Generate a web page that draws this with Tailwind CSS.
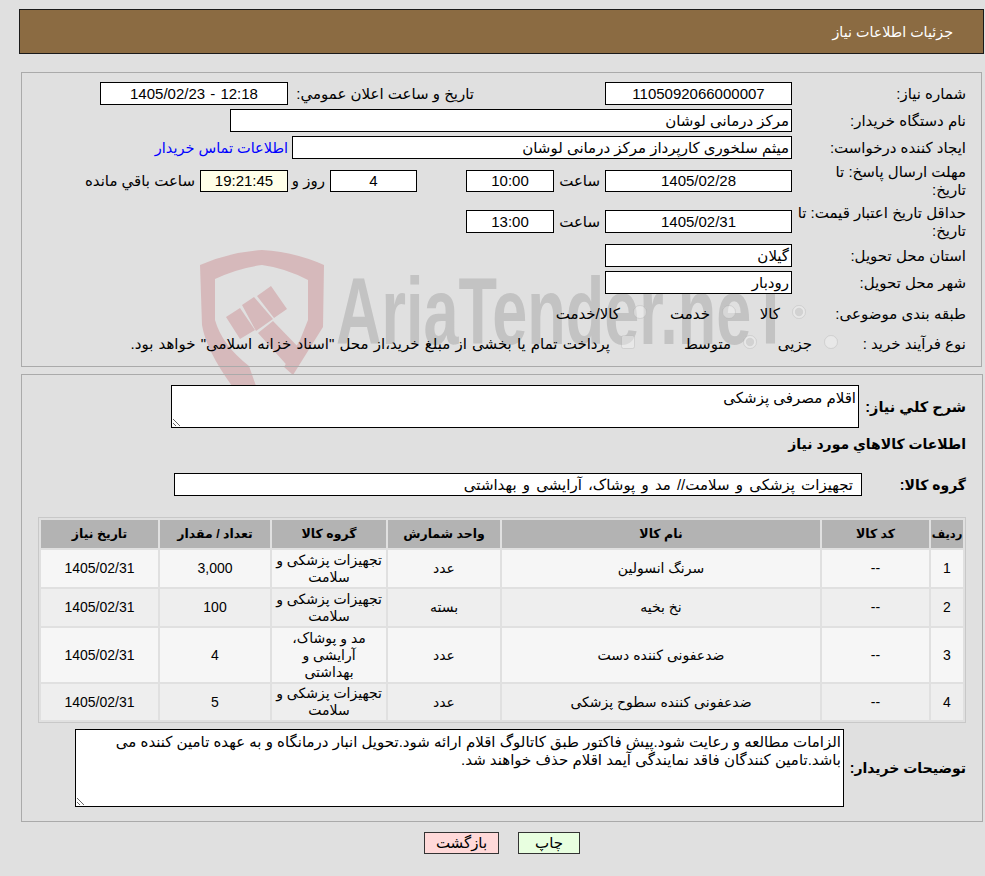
<!DOCTYPE html>
<html lang="fa" dir="rtl">
<head>
    <meta charset="UTF-8">
    <title>جزئیات اطلاعات نیاز</title>
    <script src="https://cdn.jsdelivr.net/npm/@tailwindcss/browser@4"></script>
</head>
<body class="relative bg-[#e0e0e0] w-[985px] h-[876px] overflow-hidden text-[15px] leading-[18px] text-black font-['Liberation_Sans','DejaVu_Sans',sans-serif]">
    <!-- watermark, sits under both panels -->
    <svg class="absolute left-[190px] top-[240px]" width="150" height="146" viewBox="190 240 150 146">
        <path fill="#d6b9bb" fill-rule="evenodd" d="M200 265 Q230 252 262 250 Q295 252 324 265 L323 327 L293 375 L284 367 L300 340 L308 320 L308 280 Q285 268 262 265 Q238 268 215 279 L215 320 Q222 345 249 366 L256 386 L232 386 Q206 350 202 325 Z"/>
        <path fill="#d6b9bb" d="M226 317 L240 308 L255 330 L240 339 Z M242 305 L254 297 L273 319 L256 331 Z M257 296 L271 286 L287 309 L274 318 Z M258 333 L273 321 L303 352 L293 372 Z"/>
    </svg>
    <div dir="ltr" class="absolute left-[336px] top-[262px] text-[94px] leading-[100px] font-bold text-[#c3c3c3] scale-x-[0.67] origin-left whitespace-nowrap">AriaTender.neT</div>

    <!-- header bar -->
    <div class="relative mr-px w-[965px] mt-[9px] h-[45px] bg-[#8b6b42] border border-[#1a1a1a] flex items-center pr-[30px] text-white text-[14.3px]">
        جزئیات اطلاعات نیاز
    </div>

    <!-- need details -->
    <div class="relative mr-[3px] w-[961px] mt-[18px] h-[295px] border border-[#aaa] pt-[9px] pr-[15px]">
        <div class="flex items-center h-[23px]">
            <div class="w-[174px] shrink-0">شماره نیاز:</div>
            <div class="w-[187px] h-[23px] bg-white border border-black text-center leading-[21px]">1105092066000007</div>
            <div class="mr-[131px] w-[181px] whitespace-nowrap">تاریخ و ساعت اعلان عمومي:</div>
            <div class="mr-[5px] w-[188px] h-[23px] bg-white border border-black text-center leading-[21px] [word-spacing:1px]" dir="ltr">1405/02/23 - 12:18</div>
        </div>
        <div class="flex items-center h-[23px] mt-[4px]">
            <div class="w-[174px] shrink-0">نام دستگاه خریدار:</div>
            <div class="w-[562px] h-[23px] bg-white border border-black pr-[2px] leading-[21px]">مرکز درمانی لوشان</div>
        </div>
        <div class="flex items-center h-[23px] mt-[4px]">
            <div class="w-[174px] shrink-0">ایجاد کننده درخواست:</div>
            <div class="w-[500px] h-[23px] bg-white border border-black pr-[2px] leading-[21px]">میثم سلخوری کارپرداز مرکز درمانی لوشان</div>
            <a href="#" class="mr-[4px] text-[#0000ff] whitespace-nowrap text-[14.5px]">اطلاعات تماس خریدار</a>
        </div>
        <div class="flex items-center h-[36px] mt-[4px]">
            <div class="w-[174px] shrink-0">مهلت ارسال پاسخ: تا<br>تاریخ:</div>
            <div class="w-[187px] h-[22px] bg-white border border-black text-center leading-[20px]">1405/02/28</div>
            <div class="mr-[5px] w-[42px] whitespace-nowrap">ساعت</div>
            <div class="mr-[4px] w-[88px] h-[22px] bg-white border border-black text-center leading-[20px]">10:00</div>
            <div class="mr-[49px] w-[87px] h-[22px] bg-white border border-black text-center leading-[20px]">4</div>
            <div class="mr-[5px] w-[28px] whitespace-nowrap">روز و</div>
            <div class="mr-[9px] w-[88px] h-[22px] bg-[#ffffe8] border border-black text-center leading-[20px]">19:21:45</div>
            <div class="mr-[5px] whitespace-nowrap">ساعت باقي مانده</div>
        </div>
        <div class="flex items-center h-[37px] mt-[4px]">
            <div class="w-[174px] shrink-0">حداقل تاریخ اعتبار قیمت: تا<br>تاریخ:</div>
            <div class="w-[187px] h-[23px] bg-white border border-black text-center leading-[21px]">1405/02/31</div>
            <div class="mr-[5px] w-[42px] whitespace-nowrap">ساعت</div>
            <div class="mr-[4px] w-[88px] h-[23px] bg-white border border-black text-center leading-[21px]">13:00</div>
        </div>
        <div class="flex items-center h-[23px] mt-[4px]">
            <div class="w-[174px] shrink-0">استان محل تحویل:</div>
            <div class="w-[187px] h-[23px] bg-white border border-black pr-[2px] leading-[21px]">گیلان</div>
        </div>
        <div class="flex items-center h-[23px] mt-[4px]">
            <div class="w-[174px] shrink-0">شهر محل تحویل:</div>
            <div class="w-[187px] h-[23px] border border-black bg-white pr-[2px] leading-[21px]">رودبار</div>
        </div>
        <div class="flex items-center h-[23px] mt-[8px]">
            <div class="w-[160px] shrink-0">طبقه بندی موضوعی:</div>
            <label class="w-[70px] shrink-0 flex items-center gap-[12px]"><input type="radio" name="kind" disabled checked class="w-[14px] h-[14px] m-0 mb-[3px] opacity-60"><span>کالا</span></label>
            <label class="w-[89px] shrink-0 flex items-center gap-[12px]"><input type="radio" name="kind" disabled class="w-[14px] h-[14px] m-0 mb-[3px] opacity-60"><span>خدمت</span></label>
            <label class="flex items-center gap-[13px]"><input type="radio" name="kind" disabled class="w-[14px] h-[14px] m-0 mb-[3px] opacity-60"><span>کالا/خدمت</span></label>
        </div>
        <div class="flex items-center h-[23px] mt-[7px]">
            <div class="w-[128px] shrink-0">نوع فرآیند خرید :</div>
            <label class="w-[81px] shrink-0 flex items-center gap-[12px]"><input type="radio" name="proc" disabled class="w-[14px] h-[14px] m-0 mb-[3px] opacity-60"><span>جزیی</span></label>
            <label class="w-[122px] shrink-0 flex items-center gap-[12px]"><input type="radio" name="proc" disabled checked class="w-[14px] h-[14px] m-0 mb-[3px] opacity-60"><span>متوسط</span></label>
            <label class="flex items-center gap-[11px] whitespace-nowrap"><input type="checkbox" disabled class="w-[14px] h-[14px] m-0 mb-[3px] opacity-60"><span class="[word-spacing:1px]">پرداخت تمام یا بخشی از مبلغ خرید،از محل "اسناد خزانه اسلامی" خواهد بود.</span></label>
        </div>
    </div>

    <!-- goods -->
    <div class="relative mr-[2px] w-[962px] mt-[7px] h-[448px] border border-[#aaa] pt-[10px] pr-[16px]">
        <div class="flex items-center">
            <div class="w-[107px] shrink-0 font-bold text-[14.5px] whitespace-nowrap">شرح کلي نیاز:</div>
            <textarea readonly class="block w-[688px] h-[43px] bg-white border border-black px-[2px] pt-[3px] text-[15px] leading-[18px]">اقلام مصرفی پزشکی</textarea>
        </div>
        <div class="mt-[6px] h-[20px] leading-[20px] font-bold text-[14px]">اطلاعات کالاهاي مورد نیاز</div>
        <div class="flex items-center h-[23px] mt-[19px]">
            <div class="w-[104px] shrink-0 font-bold text-[14px]">گروه کالا:</div>
            <div class="w-[688px] h-[23px] bg-white border border-black pr-[8px] text-[15px] leading-[21px] [word-spacing:2px]">تجهیزات پزشکی و سلامت// مد و پوشاک، آرایشی و بهداشتی</div>
        </div>
        <table class="mt-[21px] w-[928px] table-fixed border-separate border-spacing-[2px] border border-[#c8c8c8] text-[14px] leading-[17px] text-center">
            <thead>
                <tr class="h-[28px] bg-[#b3b3b3] text-[12.5px]">
                    <th class="w-[32px] p-0 font-bold text-[11.5px]">ردیف</th>
                    <th class="w-[107px] p-0 font-bold">کد کالا</th>
                    <th class="w-[318px] p-0 font-bold">نام کالا</th>
                    <th class="w-[112px] p-0 font-bold">واحد شمارش</th>
                    <th class="w-[114px] p-0 font-bold">گروه کالا</th>
                    <th class="w-[110px] p-0 font-bold">تعداد / مقدار</th>
                    <th class="w-[117px] p-0 font-bold">تاریخ نیاز</th>
                </tr>
            </thead>
            <tbody>
                <tr class="h-[37px] bg-[#f6f6f6]">
                    <td class="p-0">1</td>
                    <td class="p-0">--</td>
                    <td class="p-0">سرنگ انسولین</td>
                    <td class="p-0">عدد</td>
                    <td class="p-0">تجهیزات پزشکی و سلامت</td>
                    <td class="p-0">3,000</td>
                    <td class="p-0">1405/02/31</td>
                </tr>
                <tr class="h-[37px] bg-[#eeeeee]">
                    <td class="p-0">2</td>
                    <td class="p-0">--</td>
                    <td class="p-0">نخ بخیه</td>
                    <td class="p-0">بسته</td>
                    <td class="p-0">تجهیزات پزشکی و سلامت</td>
                    <td class="p-0">100</td>
                    <td class="p-0">1405/02/31</td>
                </tr>
                <tr class="h-[54px] bg-[#f6f6f6]">
                    <td class="p-0">3</td>
                    <td class="p-0">--</td>
                    <td class="p-0">ضدعفونی کننده دست</td>
                    <td class="p-0">عدد</td>
                    <td class="p-0 px-[8px]">مد و پوشاک، آرایشی و بهداشتی</td>
                    <td class="p-0">4</td>
                    <td class="p-0">1405/02/31</td>
                </tr>
                <tr class="h-[36px] bg-[#eeeeee]">
                    <td class="p-0">4</td>
                    <td class="p-0">--</td>
                    <td class="p-0">ضدعفونی کننده سطوح پزشکی</td>
                    <td class="p-0">عدد</td>
                    <td class="p-0">تجهیزات پزشکی و سلامت</td>
                    <td class="p-0">5</td>
                    <td class="p-0">1405/02/31</td>
                </tr>
            </tbody>
        </table>
        <div class="flex items-center mt-[6px]">
            <div class="w-[122px] shrink-0 font-bold text-[14px] whitespace-nowrap">توضیحات خریدار:</div>
            <textarea readonly class="block w-[769px] h-[78px] bg-white border border-black px-[2px] pt-[3px] text-[15px] leading-[18px]">الزامات مطالعه و رعایت شود.پیش فاکتور طبق کاتالوگ اقلام ارائه شود.تحویل انبار درمانگاه و به عهده تامین کننده می باشد.تامین کنندگان فاقد نمایندگی آیمد اقلام حذف خواهند شد.</textarea>
        </div>
    </div>

    <!-- actions -->
    <div class="relative flex gap-[19px] mr-[405px] mt-[10px]">
        <button class="w-[62px] h-[22px] bg-[#e8ffe0] border border-[#333]">چاپ</button>
        <button class="w-[75px] h-[22px] bg-[#ffd9d9] border border-[#333]">بازگشت</button>
    </div>
</body>
</html>
